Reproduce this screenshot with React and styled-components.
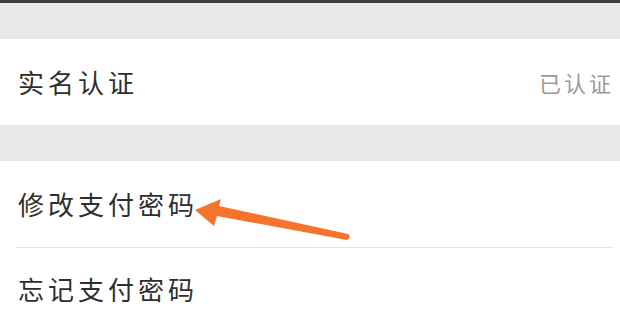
import React from "react";
import styled, { createGlobalStyle } from "styled-components";

const Global = createGlobalStyle`
  html, body { margin: 0; padding: 0; background: #ffffff; }
  body { width: 620px; height: 314px; overflow: hidden; }
`;

const Page = styled.div`
  position: relative;
  width: 620px;
  height: 314px;
  overflow: hidden;
  background: #ffffff;
  font-family: "Noto Sans CJK SC", "Noto Sans", sans-serif;
  display: flex;
  flex-direction: column;
`;

const TopBar = styled.div`
  height: 3px;
  background: #3c3b41;
  flex: none;
`;

const Spacer = styled.div`
  height: ${(p) => p.$h}px;
  background: #e8e8e8;
  flex: none;
`;

const Group = styled.div`
  background: #ffffff;
  display: flex;
  flex-direction: column;
  flex: none;
`;

const Row = styled.div`
  height: ${(p) => p.$h || 86}px;
  display: flex;
  align-items: center;
  justify-content: space-between;
  padding: 0 9px 0 18px;
`;

const Label = styled.span`
  font-size: 26px;
  letter-spacing: 4px;
  color: #2e2e2e;
  line-height: 1;
`;

const Value = styled.span`
  font-size: 22px;
  letter-spacing: 3px;
  margin-right: -3px;
  color: #9a9a9a;
  line-height: 1;
`;

const Divider = styled.div`
  height: 1px;
  background: #e4e4e4;
  margin: 0 7px 0 16px;
`;

const ArrowLayer = styled.svg`
  position: absolute;
  left: 0;
  top: 0;
  width: 620px;
  height: 314px;
  pointer-events: none;
`;

export default function App() {
  return (
    <>
      <Global />
      <Page>
        <TopBar />
        <Spacer $h={36} />
        <Group>
          <Row>
            <Label>实名认证</Label>
            <Value>已认证</Value>
          </Row>
        </Group>
        <Spacer $h={36} />
        <Group>
          <Row>
            <Label>修改支付密码</Label>
          </Row>
          <Divider />
          <Row $h={82}>
            <Label>忘记支付密码</Label>
          </Row>
        </Group>
        <ArrowLayer viewBox="0 0 620 314">
          <path
            d="M195,210 L221,199 L219,206 L348,234 Q352,237 347,240 L217,216 L214,226 Z"
            fill="#f5732b"
          />
        </ArrowLayer>
      </Page>
    </>
  );
}
